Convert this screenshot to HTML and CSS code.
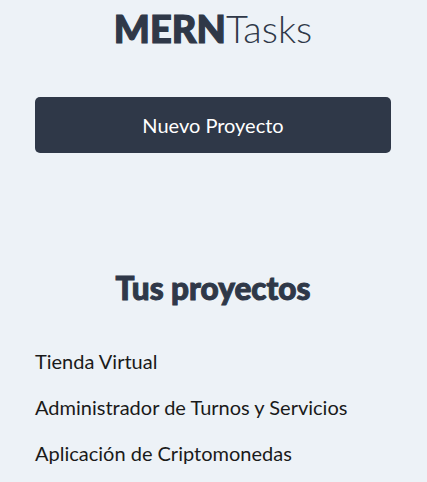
FILE: index.html
```html
<!DOCTYPE html>
<html lang="es">
<head>
<meta charset="utf-8">
<title>MERNTasks</title>
<link rel="stylesheet" href="styles.css">
</head>
<body>
<aside class="sidebar">
  <h1 class="logo"><span class="logo-strong">MERN</span><span class="logo-light">Tasks</span></h1>
  <button class="btn-new" type="button">Nuevo Proyecto</button>
  <section class="projects">
    <h2 class="projects-title">Tus proyectos</h2>
    <ul class="project-list">
      <li class="project-item"><span class="project-link">Tienda Virtual</span></li>
      <li class="project-item"><span class="project-link">Administrador de Turnos y Servicios</span></li>
      <li class="project-item"><span class="project-link">Aplicación de Criptomonedas</span></li>
    </ul>
  </section>
</aside>
</body>
</html>
```

FILE: styles.css
```css
* { box-sizing: border-box; }
html, body { margin: 0; padding: 0; }
body {
  background: #edf2f7;
  color: #2f3848;
  font-family: Lato, "Open Sans", sans-serif;
}
.sidebar {
  display: flex;
  flex-direction: column;
  padding: 0 36px 0 35px;
}
.logo {
  margin: 0;
  padding-top: 5px;
  text-align: center;
  font-size: 38px;
  line-height: 46px;
  color: #2f3848;
}
.logo-strong {
  font-weight: 900;
  -webkit-text-stroke: 1.2px #2f3848;
}
.logo-light { font-weight: 300; }
.btn-new {
  margin-top: 46px;
  height: 56px;
  width: 100%;
  border: none;
  border-radius: 5px;
  background: #2f3848;
  color: #ffffff;
  font-family: Lato, "Open Sans", sans-serif;
  font-size: 20px;
  font-weight: 400;
  padding: 0;
}
.projects { display: flex; flex-direction: column; margin-top: 115px; }
.projects-title {
  margin: 0;
  text-align: center;
  font-size: 31.5px;
  font-weight: 900;
  line-height: 40px;
  -webkit-text-stroke: 1px #2f3848;
}
.project-list {
  list-style: none;
  margin: 40px 0 0;
  padding: 0;
  display: flex;
  flex-direction: column;
  gap: 20px;
}
.project-item {
  font-size: 20px;
  line-height: 26px;
  font-weight: 400;
}
.project-link { color: #1a1a1a; }
```
